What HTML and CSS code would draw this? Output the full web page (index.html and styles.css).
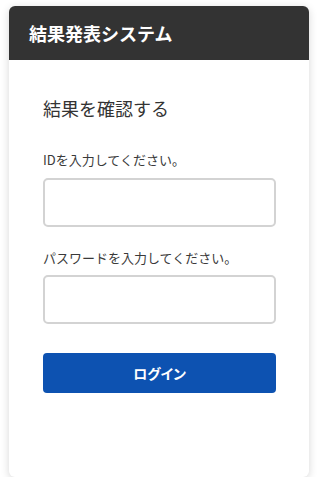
FILE: index.html
```html
<!DOCTYPE html>
<html lang="ja">
<head>
<meta charset="utf-8">
<title>結果発表システム</title>
<link rel="stylesheet" href="styles.css">
</head>
<body>
<div class="card">
  <header class="card-header">結果発表システム</header>
  <main class="card-body">
    <h1 class="title">結果を確認する</h1>
    <label class="label">IDを入力してください。</label>
    <input class="field" type="text">
    <label class="label label-2">パスワードを入力してください。</label>
    <input class="field" type="password">
    <button class="btn" type="button">ログイン</button>
  </main>
</div>
</body>
</html>
```
FILE: styles.css
```css
html, body {
  margin: 0;
  padding: 0;
  background: #ffffff;
}
body {
  font-family: "Noto Sans CJK JP", "Noto Sans", sans-serif;
  color: #333333;
  padding: 6px 9px 0 9px;
}
.card {
  width: 300px;
  height: 471px;
  background: #ffffff;
  border-radius: 6px;
  box-shadow: 0 2px 8px rgba(0, 0, 0, 0.16);
  overflow: hidden;
  display: flex;
  flex-direction: column;
}
.card-header {
  height: 54px;
  background: #333333;
  color: #ffffff;
  font-size: 18px;
  font-weight: 700;
  line-height: 54px;
  padding-left: 20px;
}
.card-body {
  display: flex;
  flex-direction: column;
  padding: 0 33px 0 34px;
}
.title {
  margin: 36px 0 0 0;
  font-size: 18px;
  font-weight: 400;
  line-height: 24px;
  color: #333333;
}
.label {
  margin-top: 31px;
  font-size: 13px;
  font-weight: 400;
  line-height: 18px;
  color: #3a3a3a;
}
.label-2 {
  margin-top: 22px;
}
.field {
  margin: 9px 0 0 0;
  box-sizing: border-box;
  height: 49px;
  width: 100%;
  border: 2px solid #d3d3d3;
  border-radius: 5px;
  background: #ffffff;
  outline: none;
}
.label-2 + .field {
  margin-top: 8px;
}
.btn {
  margin-top: 29px;
  height: 40px;
  width: 100%;
  border: none;
  border-radius: 4px;
  background: #0d52b1;
  color: #ffffff;
  font-family: "Noto Sans CJK JP", "Noto Sans", sans-serif;
  font-size: 14px;
  font-weight: 700;
  font-feature-settings: "palt";
}
```
